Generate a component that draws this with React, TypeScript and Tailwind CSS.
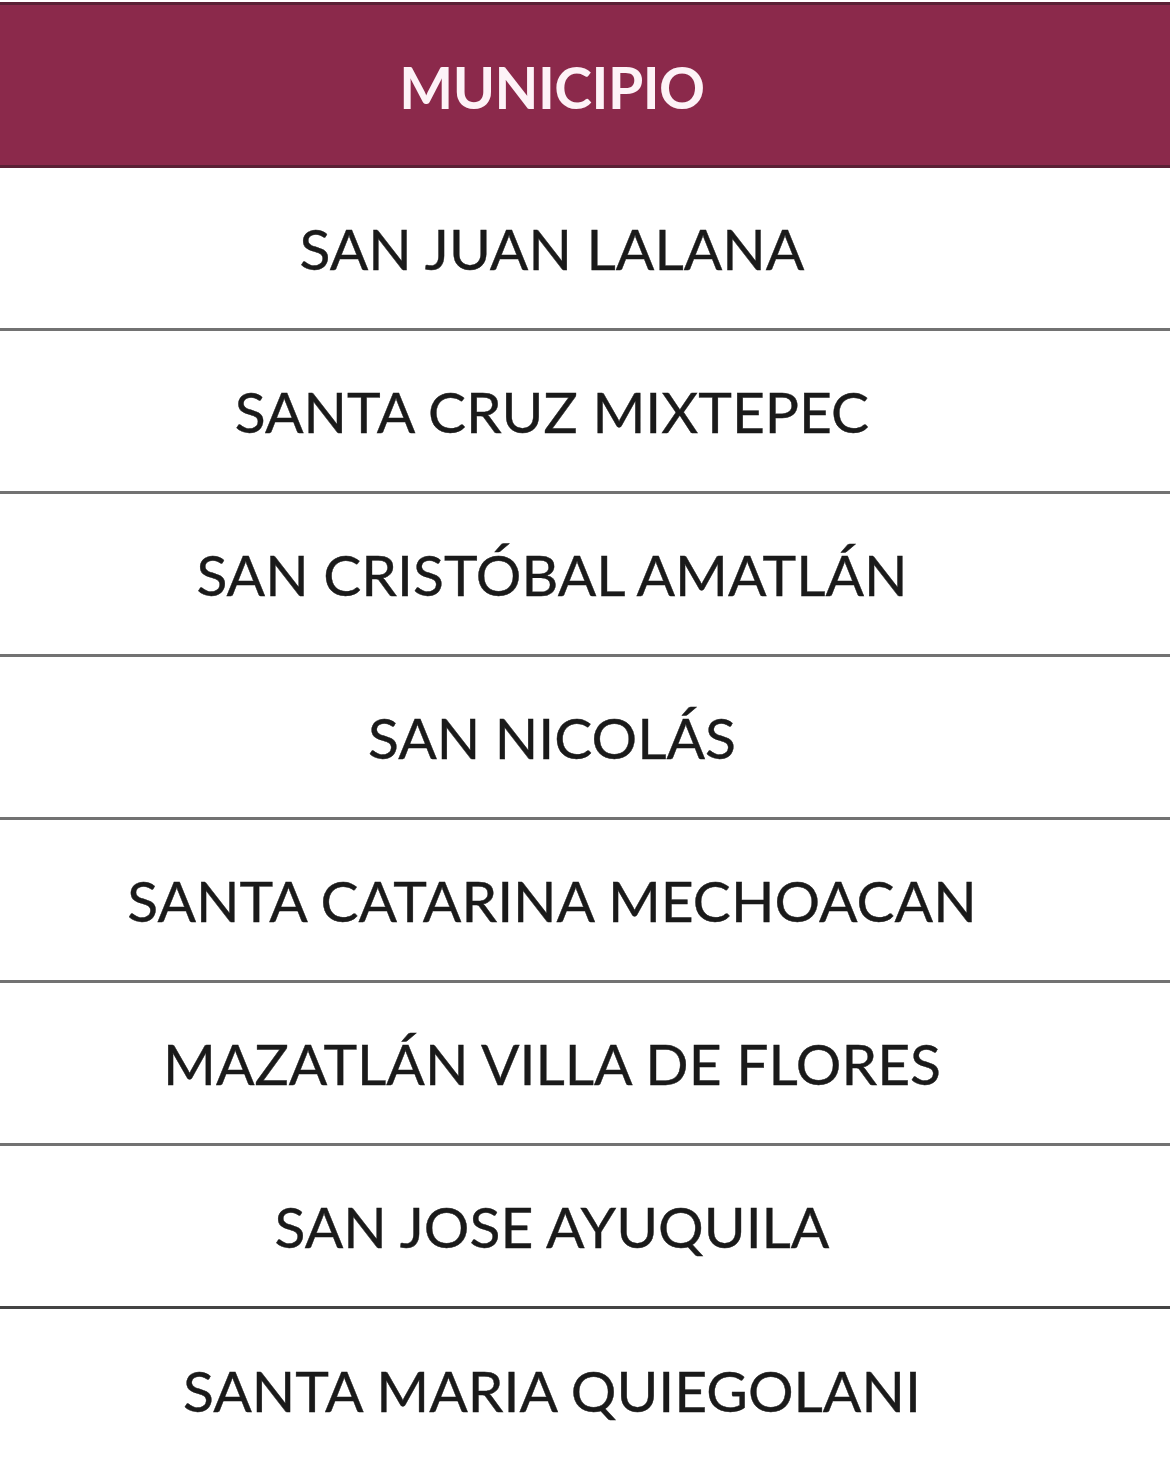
const municipios = [
  "SAN JUAN LALANA",
  "SANTA CRUZ MIXTEPEC",
  "SAN CRISTÓBAL AMATLÁN",
  "SAN NICOLÁS",
  "SANTA CATARINA MECHOACAN",
  "MAZATLÁN VILLA DE FLORES",
  "SAN JOSE AYUQUILA",
  "SANTA MARIA QUIEGOLANI",
];

export default function App() {
  return (
    <div className="w-[1170px] h-[1466px] overflow-hidden bg-white pt-[2px] font-['Lato',sans-serif]">
      <div className="h-[166px] flex items-center justify-center pr-[66px] pt-[4px] bg-[#8b294b] border-y-[3px] border-[#5a2035]">
        <span className="text-[57px] font-bold text-[#fdf3f7] leading-none tracking-[-0.5px]">MUNICIPIO</span>
      </div>
      {municipios.map((m, i) => (
        <div
          key={m}
          className={`h-[163px] flex items-center justify-center pr-[66px] ${
            i === municipios.length - 2
              ? "border-b-[3px] border-[#444444]"
              : i < municipios.length - 1
              ? "border-b-[3px] border-[#727272]"
              : ""
          }`}
        >
          <span className="text-[57px] text-[#1a1a1a] leading-none [-webkit-text-stroke:0.4px_#1a1a1a]">{m}</span>
        </div>
      ))}
    </div>
  );
}
